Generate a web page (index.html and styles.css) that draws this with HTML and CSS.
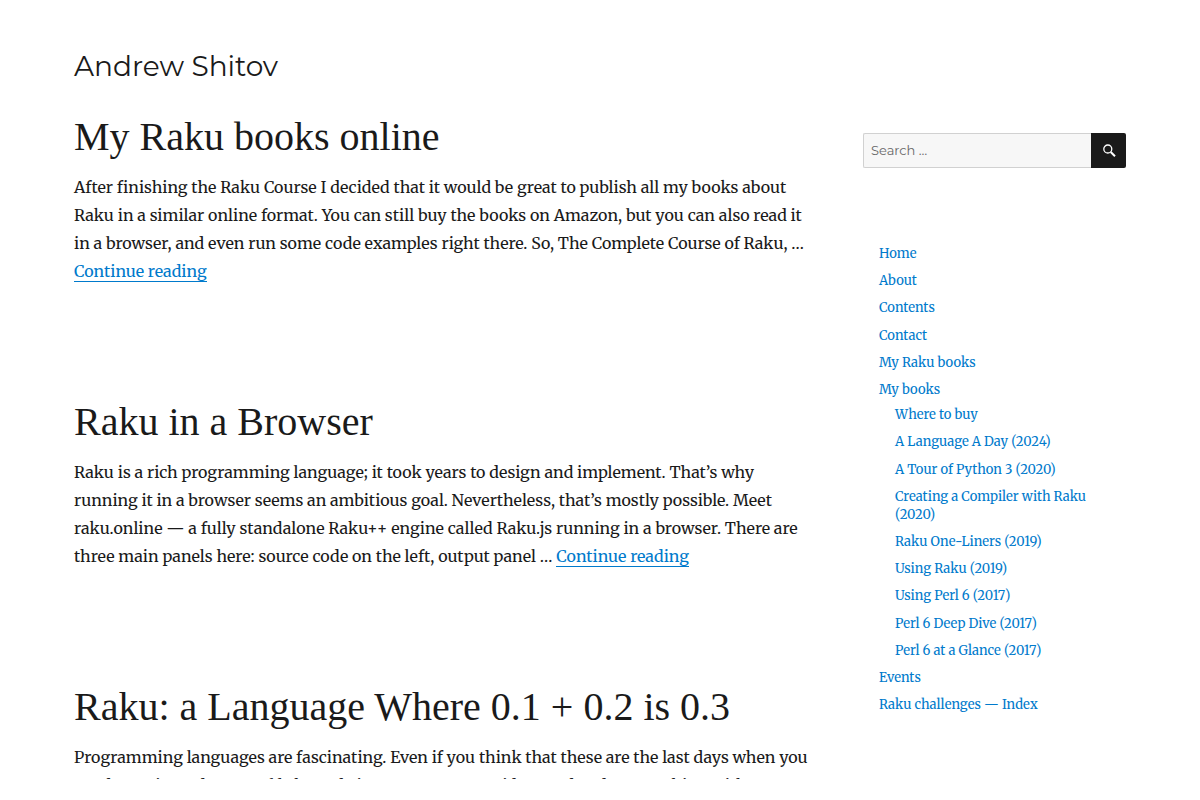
FILE: index.html
```
<!DOCTYPE html>
<html lang="en">
<head>
    <meta charset="UTF-8">
    <meta name="viewport" content="width=device-width, initial-scale=1.0">
    <title>Andrew Shitov</title>
    <link rel="stylesheet" href="styles.css">
</head>
<body>
    <div class="site">
        <header class="site-header">
            <p class="site-title"><a href="#">Andrew Shitov</a></p>
        </header>

        <div class="site-content">
            <main class="posts">
                <article class="post">
                    <h2 class="post-title"><a href="#">My Raku books online</a></h2>
                    <p>After finishing the Raku Course I decided that it would be great to publish all my books about Raku in a similar online format. You can still buy the books on Amazon, but you can also read it in a browser, and even run some code examples right there. So, The Complete Course of Raku, … <a href="#" class="more-link">Continue reading</a></p>
                </article>

                <article class="post">
                    <h2 class="post-title"><a href="#">Raku in a Browser</a></h2>
                    <p>Raku is a rich programming language; it took years to design and implement. That’s why running it in a browser seems an ambitious goal. Nevertheless, that’s mostly possible. Meet raku.online — a fully standalone Raku++ engine called Raku.js running in a browser. There are three main panels here: source code on the left, output panel … <a href="#" class="more-link">Continue reading</a></p>
                </article>

                <article class="post">
                    <h2 class="post-title"><a href="#">Raku: a Language Where 0.1 + 0.2 is 0.3</a></h2>
                    <p>Programming languages are fascinating. Even if you think that these are the last days when you need to write code yourself, the code is a way to express ideas and to do some thing with</p>
                </article>
            </main>

            <aside class="sidebar">
                <form class="search-form" role="search">
                    <input type="search" class="search-field" placeholder="Search …" aria-label="Search for:">
                    <button type="submit" class="search-submit" aria-label="Search">
                        <svg width="14" height="14" viewBox="0 0 14 14" fill="none" stroke="currentColor" aria-hidden="true">
                            <circle cx="5.8" cy="5" r="4" stroke-width="1.3"/>
                            <path d="M8.7 8l4.3 4.3" stroke-width="2"/>
                        </svg>
                    </button>
                </form>

                <nav class="menu" aria-label="Pages">
                    <ul>
                        <li><a href="#">Home</a></li>
                        <li><a href="#">About</a></li>
                        <li><a href="#">Contents</a></li>
                        <li><a href="#">Contact</a></li>
                        <li><a href="#">My Raku books</a></li>
                        <li><a href="#">My books</a>
                            <ul class="sub-menu">
                                <li><a href="#">Where to buy</a></li>
                                <li><a href="#">A Language A Day (2024)</a></li>
                                <li><a href="#">A Tour of Python 3 (2020)</a></li>
                                <li><a href="#">Creating a Compiler with Raku (2020)</a></li>
                                <li><a href="#">Raku One-Liners (2019)</a></li>
                                <li><a href="#">Using Raku (2019)</a></li>
                                <li><a href="#">Using Perl 6 (2017)</a></li>
                                <li><a href="#">Perl 6 Deep Dive (2017)</a></li>
                                <li><a href="#">Perl 6 at a Glance (2017)</a></li>
                            </ul>
                        </li>
                        <li><a href="#">Events</a></li>
                        <li><a href="#">Raku challenges — Index</a></li>
                    </ul>
                </nav>
            </aside>
        </div>
    </div>
</body>
</html>
```
FILE: styles.css
```
* {
    box-sizing: border-box;
    margin: 0;
    padding: 0;
}

html {
    height: 100%;
}

/* the window keeps a white frame, the page scrolls inside it */
body {
    height: 100%;
    background-color: #fff;
    color: #1a1a1a;
    font-family: Merriweather, "DejaVu Serif Condensed", "DejaVu Serif", serif;
    font-size: 16px;
    line-height: 28px;
    border: 21px solid #fff;
    overflow: hidden;
}

a {
    color: #007acc;
    text-decoration: none;
}

.site {
    max-width: 1320px;
    height: 100%;
    margin: 0 auto;
    padding: 0 53px;
    overflow-y: auto;
    scrollbar-width: none;
}

.site-header {
    padding: 27px 0 30px;
}

.site-title {
    font-family: Montserrat, Inter, sans-serif;
    font-size: 28px;
    font-weight: 400;
    line-height: 36px;
}

.site-title a,
.post-title a {
    color: #1a1a1a;
}

.site-content {
    display: flex;
    justify-content: space-between;
}

.posts {
    width: 70%;
}

.post {
    margin-bottom: 114px;
}

.post-title {
    font-family: "Liberation Serif", serif;
    font-size: 40px;
    font-weight: 400;
    line-height: 46px;
    margin-bottom: 13px;
}

.more-link {
    border-bottom: 1px solid #007acc;
}

.sidebar {
    width: 25%;
    padding-top: 19px;
}

.search-form {
    display: flex;
    margin-bottom: 77px;
}

.search-field {
    flex: 1;
    min-width: 0;
    height: 35px;
    padding: 0 7px 2px;
    border: 1px solid #d1d1d1;
    border-right: none;
    border-radius: 2px 0 0 2px;
    background-color: #f7f7f7;
    color: #686868;
    font-family: Montserrat, Inter, sans-serif;
    font-size: 13px;
    appearance: none;
}

.search-field::placeholder {
    color: #686868;
}

.search-submit {
    display: flex;
    align-items: center;
    justify-content: center;
    width: 35px;
    height: 35px;
    border: none;
    border-radius: 0 2px 2px 0;
    background-color: #1a1a1a;
    color: #fff;
    cursor: pointer;
}

.menu {
    padding: 0 16px;
    font-size: 13px;
    line-height: 1.4;
}

.menu ul {
    list-style: none;
}

.menu li {
    margin-bottom: 9px;
}

.menu .sub-menu {
    padding: 7px 0 0 16px;
}

@media (max-width: 900px) {
    .site-content {
        display: block;
    }

    .posts,
    .sidebar {
        width: 100%;
    }
}
```
